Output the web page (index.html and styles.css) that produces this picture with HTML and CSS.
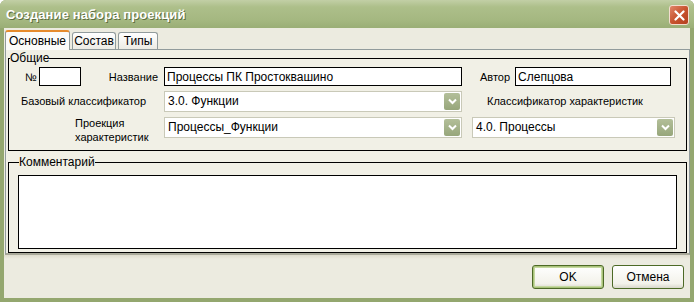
FILE: index.html
```html
<!DOCTYPE html>
<html lang="ru">
<head>
    <meta charset="UTF-8">
    <title>Создание набора проекций</title>
    <link rel="stylesheet" href="styles.css">
</head>
<body>
    <div class="window">
        <div class="titlebar">
            <span class="title">Создание набора проекций</span>
            <button class="close-btn" title="Закрыть">
                <svg width="11" height="11" viewBox="0 0 11 11">
                    <path d="M1.5 1.5 L9.5 9.5 M9.5 1.5 L1.5 9.5" stroke="#fff" stroke-width="2.2" stroke-linecap="round"/>
                </svg>
            </button>
        </div>

        <div class="client">
            <div class="tabs">
                <div class="tab active tab-main">Основные</div>
                <div class="tab tab-content">Состав</div>
                <div class="tab tab-types">Типы</div>
            </div>

            <div class="tab-panel">
                <fieldset class="group group-main">
                    <legend>Общие</legend>
                    <div class="form-grid">
                        <div class="cell cell-first">
                            <span class="lbl lbl-num">№</span>
                            <input class="edit edit-num" type="text">
                            <span class="lbl lbl-name">Название</span>
                        </div>
                        <input class="edit edit-name" type="text" value="Процессы ПК Простоквашино">
                        <div class="cell cell-author">
                            <span class="lbl">Автор</span>
                            <input class="edit edit-author" type="text" value="Слепцова">
                        </div>

                        <span class="lbl lbl-base">Базовый классификатор</span>
                        <div class="combo">
                            <span class="combo-text">3.0. Функции</span>
                            <span class="combo-btn"><svg width="9" height="7" viewBox="0 0 9 7"><path d="M1 1.5 L4.5 5 L8 1.5" fill="none" stroke="#fff" stroke-width="2"/></svg></span>
                        </div>
                        <span class="lbl lbl-char">Классификатор характеристик</span>

                        <span class="lbl lbl-proj">Проекция<br>характеристик</span>
                        <div class="combo">
                            <span class="combo-text">Процессы_Функции</span>
                            <span class="combo-btn"><svg width="9" height="7" viewBox="0 0 9 7"><path d="M1 1.5 L4.5 5 L8 1.5" fill="none" stroke="#fff" stroke-width="2"/></svg></span>
                        </div>
                        <div class="combo combo-right">
                            <span class="combo-text">4.0. Процессы</span>
                            <span class="combo-btn"><svg width="9" height="7" viewBox="0 0 9 7"><path d="M1 1.5 L4.5 5 L8 1.5" fill="none" stroke="#fff" stroke-width="2"/></svg></span>
                        </div>
                    </div>
                </fieldset>

                <fieldset class="group group-comment">
                    <legend>Комментарий</legend>
                    <textarea class="memo"></textarea>
                </fieldset>
            </div>

            <div class="footer">
                <button class="btn btn-default">OK</button>
                <button class="btn">Отмена</button>
            </div>
        </div>
    </div>
</body>
</html>
```

FILE: styles.css
```css
body {
    margin: 0;
    background: #ffffff;
    font-family: 'Liberation Sans', Arial, sans-serif;
    font-size: 11px;
    color: #000;
}

.window {
    width: 694px;
    height: 302px;
    box-sizing: border-box;
    display: flex;
    flex-direction: column;
    background: #94a76f;
    border-radius: 6px 6px 0 0;
    overflow: hidden;
}

.titlebar {
    height: 28px;
    flex: none;
    display: flex;
    align-items: center;
    justify-content: space-between;
    padding: 0 5px 0 6px;
    background: linear-gradient(#c2cfa6 0%, #adbf8a 25%, #a5b881 70%, #9aae76 100%);
}

.title {
    color: #fff;
    font-weight: bold;
    font-size: 13px;
    letter-spacing: 0.1px;
    text-shadow: 1px 1px 0 #5d6e3f;
}

.close-btn {
    width: 20px;
    height: 20px;
    padding: 0;
    display: flex;
    align-items: center;
    justify-content: center;
    border: 1px solid #f3ddd0;
    border-radius: 3px;
    background: linear-gradient(135deg, #e0866a 0%, #c8542f 50%, #b4401f 100%);
    margin-top: 2px;
}

.client {
    flex: 1;
    display: flex;
    flex-direction: column;
    margin: 0 4px 4px;
    background: #ecebe0;
    padding-top: 1px;
}

/* вкладки */
.tabs {
    display: flex;
    align-items: flex-end;
    height: 20px;
    padding-left: 1px;
    font-size: 12px;
}

.tab {
    height: 16px;
    line-height: 16px;
    text-align: center;
    margin-right: 2px;
    border: 1px solid #919b9c;
    border-bottom: none;
    border-radius: 3px 3px 0 0;
    background: linear-gradient(#ffffff, #ecebe4);
    box-sizing: content-box;
}

.tab.active {
    height: 18px;
    line-height: 19px;
    border-top: 2px solid #e68b2c;
    background: #fbfbf9;
    position: relative;
    top: 1px;
}

.tab-main {
    width: 63px;
}

.tab-content {
    width: 42px;
}

.tab-types {
    width: 38px;
}

.tab-panel {
    height: 206px;
    margin: 0 0 0 1px;
    border: 1px solid #919b9c;
    border-bottom: 2px solid #a9a99a;
    background: #f1f0e6;
    padding: 0 2px;
    box-sizing: border-box;
    display: flex;
    flex-direction: column;
}

.group {
    margin: 0;
    border: 1px solid #000;
    padding: 0;
    min-width: 0;
}

.group legend {
    padding: 0;
    margin-left: 1px;
    line-height: 14px;
    font-size: 12px;
}

.group-main {
    margin-top: 1px;
    height: 100px;
    box-sizing: border-box;
}

.form-grid {
    display: grid;
    grid-template-columns: 155px 298px 1fr;
    grid-template-rows: 19px 20px 22px;
    row-gap: 5px;
    padding-top: 2px;
    align-items: center;
}

.cell {
    display: flex;
    align-items: center;
    height: 19px;
}

.lbl {
    white-space: nowrap;
}

.lbl-num {
    margin-left: 16px;
    margin-right: 2px;
}

.edit {
    height: 19px;
    box-sizing: border-box;
    border: 1px solid #000;
    background: #fff;
    font: inherit;
    font-size: 12px;
    padding: 0 2px;
    margin: 0;
    outline: none;
}

.edit-num {
    width: 42px;
}

.lbl-name {
    margin-left: auto;
    margin-right: 6px;
}

.edit-name {
    width: 298px;
}

.cell-author {
    padding-left: 18px;
}

.cell-author .lbl {
    margin-right: 5px;
}

.edit-author {
    width: 156px;
}

.lbl-base {
    padding-left: 12px;
}

.lbl-char {
    padding-left: 25px;
}

.lbl-proj {
    padding-left: 66px;
    line-height: 14px;
    position: relative;
    top: 3px;
}

.combo {
    height: 21px;
    box-sizing: border-box;
    border: 1px solid #c9c9b8;
    background: #fff;
    display: flex;
    align-items: center;
    justify-content: space-between;
    padding: 0 1px 0 3px;
    font-size: 12px;
}

.combo-right {
    width: 203px;
    margin-left: 10px;
}

.combo-btn {
    width: 16px;
    height: 17px;
    display: flex;
    align-items: center;
    justify-content: center;
    background: linear-gradient(#b3bf99, #97a67b);
    border-radius: 2px;
}

.group-comment {
    margin-top: 4px;
    padding: 6px 9px 3px 9px;
}

.memo {
    display: block;
    width: 100%;
    height: 74px;
    box-sizing: border-box;
    border: 1px solid #000;
    resize: none;
    margin: 0;
    background: #fff;
}

.footer {
    flex: 1;
    display: flex;
    justify-content: flex-end;
    align-items: flex-start;
    gap: 8px;
    padding: 10px 6px 0 0;
    background: linear-gradient(#dedccd 0, #ecebe0 4px);
}

.btn {
    width: 72px;
    height: 24px;
    font: inherit;
    font-size: 12px;
    border: 1px solid #4d6a26;
    border-radius: 3px;
    background: linear-gradient(#ffffff, #f3f2ea 80%, #d9d8cc);
    padding: 0;
}

.btn-default {
    box-shadow: inset 0 0 0 1px #a9c37a, inset 0 0 0 2px #c5d8a0;
}
```
